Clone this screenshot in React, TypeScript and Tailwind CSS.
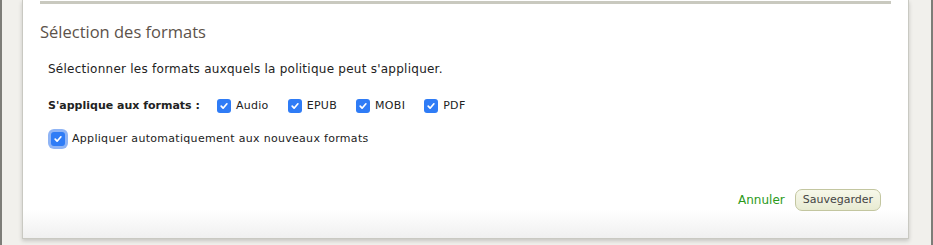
import React, { useState } from 'react';

const formats = ['Audio', 'EPUB', 'MOBI', 'PDF'];

const Check: React.FC<{ checked: boolean; focus?: boolean; onChange: () => void }> = ({ checked, focus, onChange }) => (
  <button
    type="button"
    onClick={onChange}
    className={
      'flex h-[14px] w-[14px] shrink-0 items-center justify-center rounded-[3px] ' +
      (checked ? 'bg-[#2f7cf6] ' : 'border border-[#b5b5b5] bg-white ') +
      (focus ? 'ring-[3px] ring-[#8fb4f5]' : '')
    }
  >
    {checked && (
      <svg width="10" height="10" viewBox="0 0 10 10" fill="none">
        <path d="M2.2 5.2 L4.1 7.2 L7.9 2.8" stroke="white" strokeWidth="1.7" strokeLinecap="round" strokeLinejoin="round" />
      </svg>
    )}
  </button>
);

export default function App() {
  const [selected, setSelected] = useState<Record<string, boolean>>({ Audio: true, EPUB: true, MOBI: true, PDF: true });
  const [auto, setAuto] = useState(true);

  return (
    <div className="flex h-[245px] w-[933px] overflow-hidden bg-[#f1f0ec]" style={{ fontFamily: '"DejaVu Sans", sans-serif' }}>
      <div className="w-[2px] bg-[#7d7d78]" />
      <div className="flex flex-1 pl-[20px] pr-[22px]">
        <div className="flex h-[239px] flex-1 flex-col border-x border-b border-[#c9c9c2] bg-gradient-to-b from-white from-[88%] to-[#f0f0f0] px-[17px] shadow-[0_2px_4px_rgba(0,0,0,0.18)]">
          <div className="mt-px h-[3px] bg-[#c9c9bf]" />
          <h2 className="mt-[17px] text-[16.5px] leading-[22px] text-[#5c524a]" style={{ fontFamily: '"Open Sans", sans-serif' }}>
            Sélection des formats
          </h2>
          <p className="ml-[8px] mt-[19px] text-[12px] leading-[14px] tracking-[0.25px] text-[#222]">
            Sélectionner les formats auxquels la politique peut s'appliquer.
          </p>
          <div className="ml-[8px] mt-[23px] flex items-center text-[11px] leading-[14px] tracking-[0.3px] text-[#222]">
            <span className="mr-[17px] font-bold tracking-normal">S'applique aux formats :</span>
            {formats.map((f) => (
              <label key={f} className="mr-[19px] flex items-center gap-[5px]">
                <Check checked={selected[f]} onChange={() => setSelected({ ...selected, [f]: !selected[f] })} />
                <span>{f}</span>
              </label>
            ))}
          </div>
          <label className="ml-[11px] mt-[19px] flex items-center gap-[7px] text-[11px] leading-[14px] tracking-[0.3px] text-[#222]">
            <Check checked={auto} focus onChange={() => setAuto(!auto)} />
            <span>Appliquer automatiquement aux nouveaux formats</span>
          </label>
          <div className="mt-[43px] flex items-center justify-end gap-[10px] pr-[10px]">
            <a href="#" className="text-[12px] text-[#2b9a1a]">Annuler</a>
            <button className="h-[22px] rounded-[7px] border border-[#c3c6a0] bg-gradient-to-b from-[#f7f8ea] to-[#e8ebd2] px-[7px] text-[11px] text-[#444]">
              Sauvegarder
            </button>
          </div>
        </div>
      </div>
      <div className="w-[2px] bg-[#7d7d78]" />
    </div>
  );
}
